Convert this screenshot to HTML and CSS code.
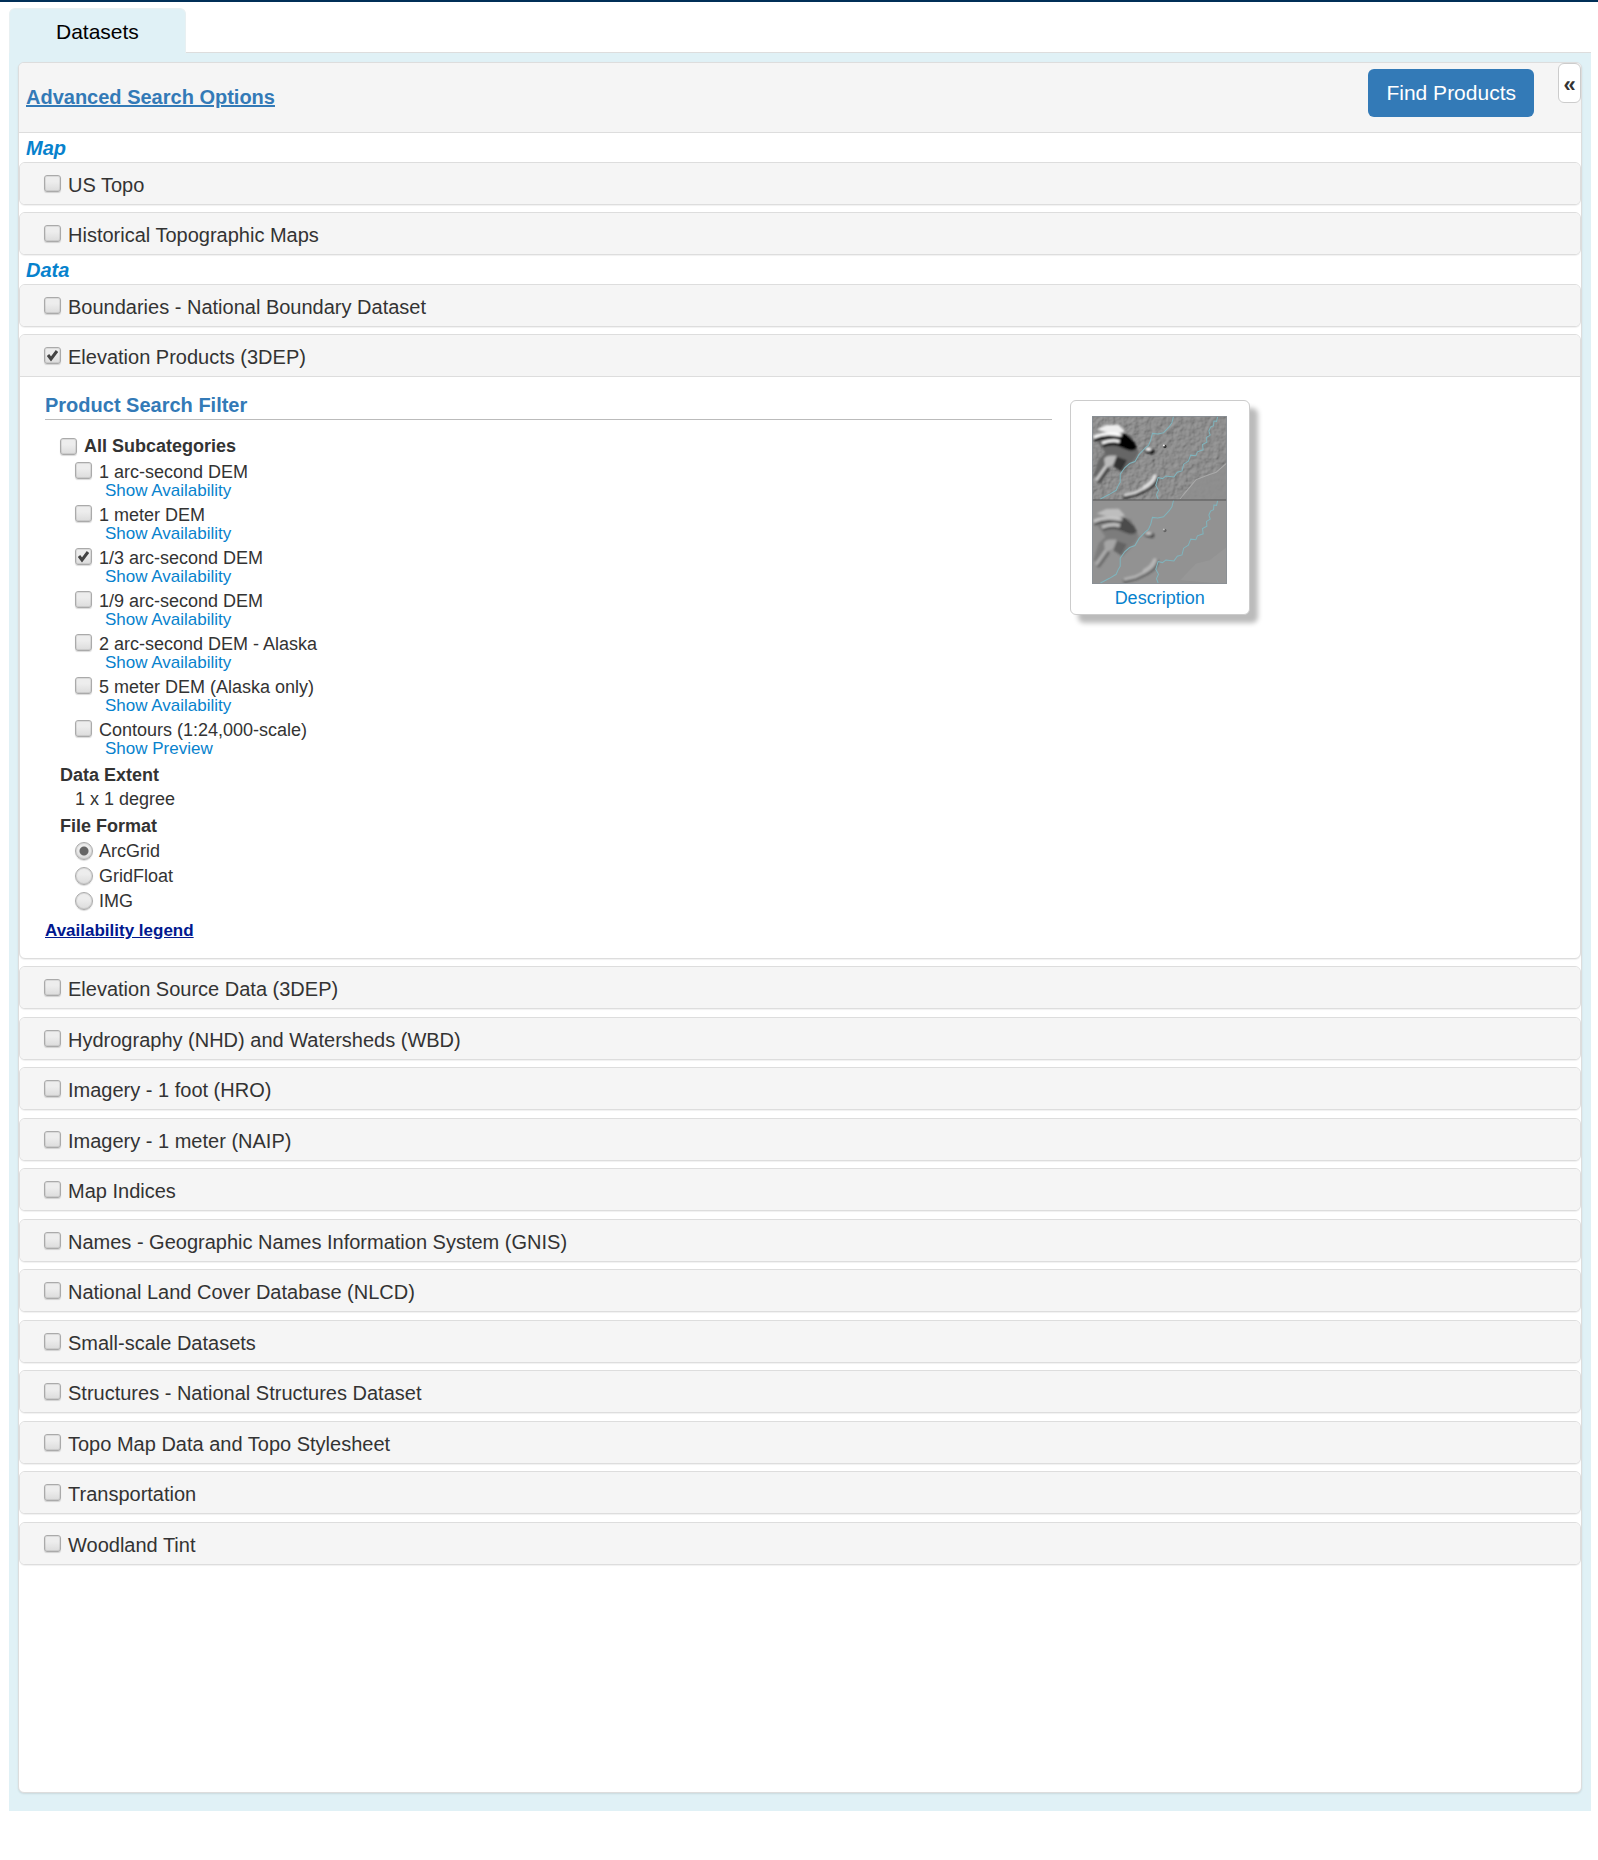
FILE: index.html
```html
<!DOCTYPE html>
<html lang="en">
<head>
<meta charset="utf-8">
<title>Datasets</title>
<link rel="stylesheet" href="styles.css">
</head>
<body>
<nav class="tabs"><a class="tab" href="#datasets">Datasets</a></nav>
<main class="tab-pane" id="datasets">
  <div class="results">
    <header class="toolbar">
      <a class="advanced" href="#advanced">Advanced Search Options</a>
      <button class="find" type="button">Find Products</button>
      <button class="collapse" type="button" aria-label="Collapse panel">«</button>
    </header>

    <h2 class="group-title">Map</h2>
    <section class="group">
      <div class="panel"><div class="panel-head"><input type="checkbox" id="ustopo"><label for="ustopo">US Topo</label></div></div>
      <div class="panel"><div class="panel-head"><input type="checkbox" id="htmc"><label for="htmc">Historical Topographic Maps</label></div></div>
    </section>

    <h2 class="group-title">Data</h2>
    <section class="group">
      <div class="panel"><div class="panel-head"><input type="checkbox" id="nbd"><label for="nbd">Boundaries - National Boundary Dataset</label></div></div>
      <div class="panel">
        <div class="panel-head open"><input type="checkbox" id="ned" checked><label for="ned">Elevation Products (3DEP)</label></div>
        <div class="panel-body">
          <div class="filter">
            <h3 class="filter-title">Product Search Filter</h3>
            <div class="filter-options">
              <div class="all"><input type="checkbox" id="all"><label for="all">All Subcategories</label></div>
              <ul class="subcategories">
                <li><div class="option"><input type="checkbox" id="s1"><label for="s1">1 arc-second DEM</label></div><a href="#a1">Show Availability</a></li>
                <li><div class="option"><input type="checkbox" id="s2"><label for="s2">1 meter DEM</label></div><a href="#a2">Show Availability</a></li>
                <li><div class="option"><input type="checkbox" id="s3" checked><label for="s3">1/3 arc-second DEM</label></div><a href="#a3">Show Availability</a></li>
                <li><div class="option"><input type="checkbox" id="s4"><label for="s4">1/9 arc-second DEM</label></div><a href="#a4">Show Availability</a></li>
                <li><div class="option"><input type="checkbox" id="s5"><label for="s5">2 arc-second DEM - Alaska</label></div><a href="#a5">Show Availability</a></li>
                <li><div class="option"><input type="checkbox" id="s6"><label for="s6">5 meter DEM (Alaska only)</label></div><a href="#a6">Show Availability</a></li>
                <li><div class="option"><input type="checkbox" id="s7"><label for="s7">Contours (1:24,000-scale)</label></div><a href="#a7">Show Preview</a></li>
              </ul>
              <h4 class="extent-title">Data Extent</h4>
              <p class="extent">1 x 1 degree</p>
              <h4 class="format-title">File Format</h4>
              <div class="format"><input type="radio" name="format" id="f1" checked><label for="f1">ArcGrid</label></div>
              <div class="format"><input type="radio" name="format" id="f2"><label for="f2">GridFloat</label></div>
              <div class="format"><input type="radio" name="format" id="f3"><label for="f3">IMG</label></div>
            </div>
            <a class="legend" href="#legend">Availability legend</a>
          </div>
          <aside class="thumb">
            <svg viewBox="0 0 402 502" preserveAspectRatio="none" role="img" aria-label="Shaded relief">
              <defs>
                <filter id="soft" x="-30%" y="-30%" width="160%" height="160%"><feGaussianBlur stdDeviation="3"/></filter>
                <filter id="rough" x="0" y="0" width="100%" height="100%">
                  <feTurbulence type="fractalNoise" baseFrequency=".06" numOctaves="3" seed="4" result="n"/>
                  <feDiffuseLighting in="n" surfaceScale="4" lighting-color="#fff"><feDistantLight azimuth="225" elevation="32"/></feDiffuseLighting>
                </filter>
                <clipPath id="half"><rect width="402" height="251"/></clipPath>
                <g id="relief">
                  <g filter="url(#soft)">
                    <path d="M15 75 60 48 115 58 140 110 128 130 90 168 60 145 25 190 4 180 20 130 40 110Z" fill="#666"/>
                    <path d="M82 48Q118 56 134 95Q125 112 88 94Q70 84 82 48Z" fill="#000"/>
                    <path d="M14 40 42 27 80 26 98 46 78 54 40 48Z" fill="#eee"/>
                    <path d="M7 72Q42 56 88 69" fill="none" stroke="#000" stroke-width="9"/>
                    <path d="M5 64Q42 46 88 58" fill="none" stroke="#fff" stroke-width="9"/>
                    <path d="M33 89Q65 78 88 90" fill="none" stroke="#000" stroke-width="8"/>
                    <path d="M30 81Q64 68 82 77" fill="none" stroke="#fff" stroke-width="8"/>
                    <path d="M72 121 104 132 87 166 63 150Z" fill="#333"/>
                    <path d="M36 128Q44 114 74 119L64 144 40 158Z" fill="#bbb"/>
                    <path d="M46 159 20 195" stroke="#444" stroke-width="13" stroke-linecap="round"/>
                    <path d="M40 153 14 190" stroke="#ccc" stroke-width="9" stroke-linecap="round"/>
                    <path d="M164 102 178 106" stroke="#111" stroke-width="16" stroke-linecap="round"/>
                    <path d="M164 99 172 99" stroke="#fff" stroke-width="9" stroke-linecap="round"/>
                    <path d="M191 184Q188 204 160 218L132 231 100 240" fill="none" stroke="#222" stroke-width="15" stroke-linecap="round"/>
                    <path d="M187 180Q180 200 157 212" fill="none" stroke="#ddd" stroke-width="13" stroke-linecap="round"/>
                    <path d="M157 215 128 229 98 236" fill="none" stroke="#ddd" stroke-width="8" stroke-linecap="round"/>
                  </g>
                  <circle cx="217" cy="91" r="5" fill="#333"/><circle cx="214" cy="88" r="3" fill="#eee"/>
                </g>
                <g id="rivers" fill="none" stroke="#7fb4bd" stroke-width="3">
                  <path d="M243 0 238 20 230 32 213 50 196 54 180 52 175 72 168 88 158 96 140 115 128 136 112 142 98 154 84 174 84 198 78 208 72 222 52 234 25 248"/>
                  <path d="M374 2 371 16 363 15 362 29 353 33 348 45 352 57 341 64 342 78 329 85 331 101 314 107 309 119 294 117 287 135 273 144 268 164 254 168 244 182 220 179 210 187 197 184 190 207 198 222 192 235 197 248"/>
                </g>
              </defs>
              <rect width="402" height="251" fill="#777"/>
              <rect width="402" height="251" filter="url(#rough)" opacity=".3"/>
              <path d="M262 251 310 190 350 175 370 168 402 140V251Z" fill="#8e8e8e" opacity=".85"/>
              <path d="M262 248 285 220 310 190 350 175 370 168 402 140" fill="none" stroke="#aaa" stroke-width="3"/>
              <g clip-path="url(#half)"><use href="#relief"/></g><use href="#rivers"/>
              <g transform="translate(0 251)">
                <rect width="402" height="251" fill="#929292"/>
                <path d="M262 240 310 190 350 180 402 140V251Z" fill="#979797"/>
                <g opacity=".48" clip-path="url(#half)"><use href="#relief"/></g><use href="#rivers"/>
              </g>
              <path d="M0 251H402" stroke="#555" stroke-width="3"/>
              <rect x="1" y="1" width="400" height="500" fill="none" stroke="#8a9096" stroke-width="3"/>
            </svg>
            <a href="#description">Description</a>
          </aside>
        </div>
      </div>
    </section>
    <section class="group more">
      <div class="panel"><div class="panel-head"><input type="checkbox" id="d1"><label for="d1">Elevation Source Data (3DEP)</label></div></div>
      <div class="panel"><div class="panel-head"><input type="checkbox" id="d2"><label for="d2">Hydrography (NHD) and Watersheds (WBD)</label></div></div>
      <div class="panel"><div class="panel-head"><input type="checkbox" id="d3"><label for="d3">Imagery - 1 foot (HRO)</label></div></div>
      <div class="panel"><div class="panel-head"><input type="checkbox" id="d4"><label for="d4">Imagery - 1 meter (NAIP)</label></div></div>
      <div class="panel"><div class="panel-head"><input type="checkbox" id="d5"><label for="d5">Map Indices</label></div></div>
      <div class="panel"><div class="panel-head"><input type="checkbox" id="d6"><label for="d6">Names - Geographic Names Information System (GNIS)</label></div></div>
      <div class="panel"><div class="panel-head"><input type="checkbox" id="d7"><label for="d7">National Land Cover Database (NLCD)</label></div></div>
      <div class="panel"><div class="panel-head"><input type="checkbox" id="d8"><label for="d8">Small-scale Datasets</label></div></div>
      <div class="panel"><div class="panel-head"><input type="checkbox" id="d9"><label for="d9">Structures - National Structures Dataset</label></div></div>
      <div class="panel"><div class="panel-head"><input type="checkbox" id="d10"><label for="d10">Topo Map Data and Topo Stylesheet</label></div></div>
      <div class="panel"><div class="panel-head"><input type="checkbox" id="d11"><label for="d11">Transportation</label></div></div>
      <div class="panel"><div class="panel-head"><input type="checkbox" id="d12"><label for="d12">Woodland Tint</label></div></div>
    </section>
  </div>
</main>
</body>
</html>
```

FILE: styles.css
```css
* { box-sizing: border-box; }

body {
  margin: 0;
  padding: 6px 7px 0 9px;
  border-top: 2px solid #002f57;
  background: #fff;
  color: #333;
  font-family: Arial, "Liberation Sans", sans-serif;
  font-size: 18px;
}

h2, h3, h4, p, ul { margin: 0; padding: 0; }
ul { list-style: none; }
a { color: #0782cd; text-decoration: none; }

/* Tabs */
.tabs {
  display: flex;
  border-bottom: 1px solid #ddd;
}
.tab {
  margin-bottom: -1px;
  padding: 11px 46px 9px;
  border: 1px solid #e8f0f2;
  border-bottom: 0;
  border-radius: 6px 6px 0 0;
  background: #e0f1f6;
  color: #000;
  font-size: 21px;
  line-height: 24px;
}
.tab-pane {
  display: flex;
  flex-direction: column;
  min-height: calc(100vh - 102px);
  padding: 9px 9px 18px;
  background: #e0f1f6;
}
.results {
  flex: 1;
  border: 1px solid #ddd;
  border-radius: 6px;
  background: #fff;
  box-shadow: 0 1px 2px rgba(0, 0, 0, .1);
}

/* Toolbar */
.toolbar {
  display: flex;
  align-items: flex-start;
  height: 70px;
  border-bottom: 1px solid #ddd;
  border-radius: 5px 5px 0 0;
  background: #f5f5f5;
}
.advanced {
  flex: 1;
  align-self: center;
  padding-left: 7px;
  color: #337ab7;
  font-size: 20px;
  font-weight: bold;
  text-decoration: underline;
}
.find {
  height: 48px;
  margin-top: 6px;
  padding: 0 18px;
  border: 0;
  border-radius: 6px;
  background: #337ab7;
  color: #fff;
  font: 21px Arial, "Liberation Sans", sans-serif;
}
.collapse {
  width: 23px;
  height: 40px;
  margin-left: 24px;
  padding: 3px 0 0;
  border: 1px solid #ccc;
  border-radius: 6px;
  background: #fff;
  color: #333;
  font: bold 22px Arial, "Liberation Sans", sans-serif;
}

/* Dataset rows */
.group-title {
  padding: 1px 0 0 7px;
  color: #0782cd;
  font-size: 20px;
  font-style: italic;
  line-height: 28px;
}
.panel {
  border: 1px solid #ddd;
  border-radius: 6px;
  background: #fff;
  box-shadow: 0 1px 1px rgba(0, 0, 0, .06);
}
.panel + .panel { margin-top: 7px; }
.more { padding-top: 7px; }
.more .panel:nth-child(even) { margin-top: 8px; }
.panel-head {
  display: flex;
  align-items: center;
  gap: 7px;
  height: 41px;
  padding-left: 24px;
  border-radius: 5px;
  background: #f5f5f5;
}
.panel-head.open {
  height: 42px;
  border-bottom: 1px solid #ddd;
  border-radius: 5px 5px 0 0;
}
.panel-head label {
  padding-top: 3px;
  font-size: 20px;
  line-height: 23px;
}

/* Tick boxes and radios */
input {
  flex: none;
  appearance: none;
  width: 17px;
  height: 17px;
  margin: 0;
  border: 1px solid #aaa;
  border-radius: 3px;
  background: linear-gradient(#ededed 38%, #dcdcdc);
  box-shadow: 0 1px 1px rgba(0, 0, 0, .15), inset 0 0 0 1px rgba(0, 0, 0, .08);
}
input[type="checkbox"]:checked {
  background: url("data:image/svg+xml,%3Csvg xmlns='http://www.w3.org/2000/svg' viewBox='0 0 15 15'%3E%3Cpath d='M3 7l3 4 6-8' fill='none' stroke='%23444' stroke-width='3'/%3E%3C/svg%3E"), linear-gradient(#ededed 38%, #dcdcdc);
}
input[type="radio"] {
  width: 18px;
  height: 18px;
  border-radius: 50%;
}
input[type="radio"]:checked {
  background: radial-gradient(circle, #666 4px, transparent 5px), linear-gradient(#ededed 38%, #dcdcdc);
}

/* Expanded dataset */
.panel-body {
  display: grid;
  grid-template-columns: 2fr 1fr;
  gap: 18px;
  align-items: start;
  padding: 17px 7px 16px 25px;
}
.filter-title {
  padding-bottom: 3px;
  border-bottom: 1px solid #bbb;
  color: #337ab7;
  font-size: 20px;
  line-height: 22px;
}
.filter-options { padding: 14px 0 6px 15px; }
.all, .option, .format { display: flex; }
.all {
  align-items: center;
  gap: 7px;
  font-weight: bold;
  line-height: 25px;
}
.subcategories { padding: 2px 0 0 15px; }
.subcategories li + li { margin-top: 5px; }
.subcategories a {
  display: block;
  width: max-content;
  margin-left: 30px;
  font-size: 17px;
  line-height: 16px;
}
.option {
  gap: 7px;
  line-height: 22px;
}
.option input { margin-top: 1px; }
h4, .extent {
  font-size: 18px;
  line-height: 24px;
}
.extent-title { margin-top: 6px; }
.extent { padding-left: 15px; }
.format-title { margin: 3px 0 1px; }
.format {
  gap: 6px;
  padding-left: 15px;
  line-height: 25px;
}
.format input { margin-top: 3px; }
.legend {
  display: block;
  width: max-content;
  color: #00188f;
  font-size: 17px;
  font-weight: bold;
  line-height: 22px;
  text-decoration: underline;
}
.thumb {
  display: flex;
  flex-direction: column;
  align-items: center;
  gap: 3px;
  width: 180px;
  margin-top: 6px;
  padding: 15px 0 5px;
  border: 1px solid #ccc;
  border-radius: 6px;
  background: #fff;
  box-shadow: 8px 8px 5px #bbb;
  line-height: 22px;
}
.thumb svg {
  width: 135px;
  height: 168px;
}
```
